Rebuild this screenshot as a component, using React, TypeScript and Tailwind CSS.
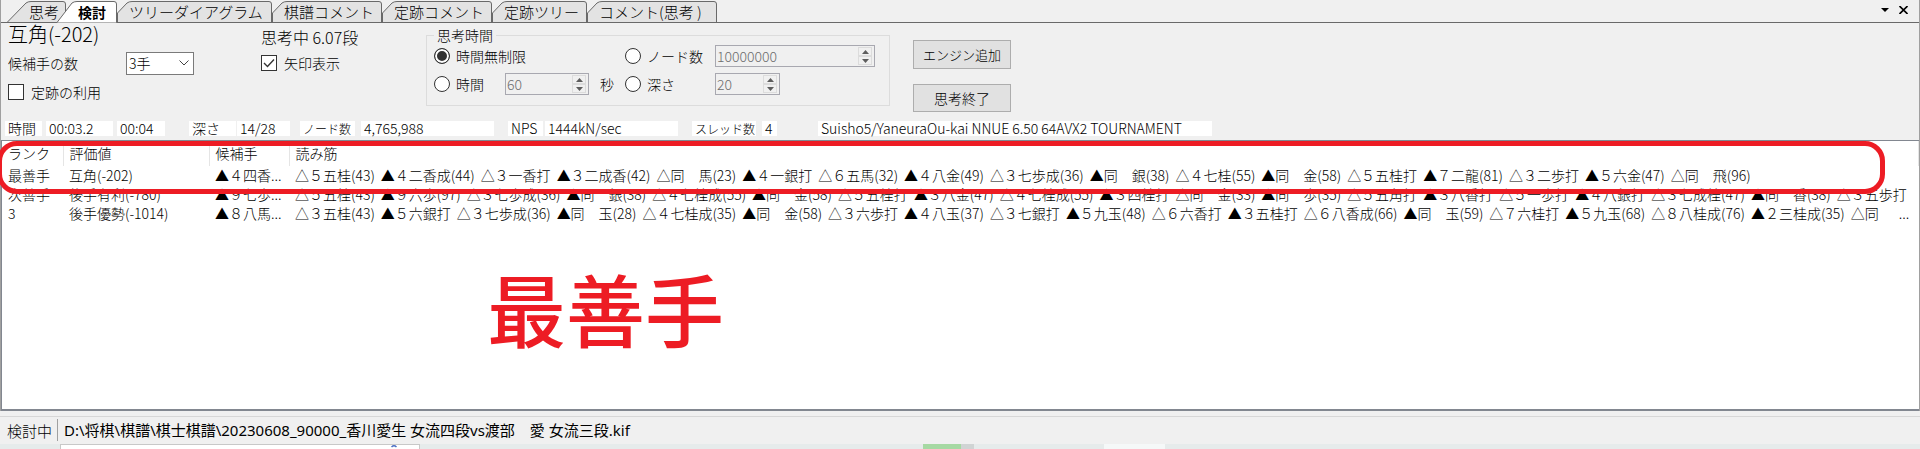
import React, { useState } from 'react';

type Tab = { label: string; width: string; w: number; slant: number; text: string };

const TABS: Tab[] = [
  { label: '思考', width: 'w-[59px]', w: 59, slant: 22, text: 'pl-[22px]' },
  { label: '検討', width: 'w-[60px] -ml-[9px]', w: 60, slant: 18, text: 'pl-[21px]' },
  { label: 'ツリーダイアグラム', width: 'w-[155px]', w: 155, slant: 12, text: 'pl-[12px]' },
  { label: '棋譜コメント', width: 'w-[110px]', w: 110, slant: 12, text: 'pl-[12px]' },
  { label: '定跡コメント', width: 'w-[110px]', w: 110, slant: 12, text: 'pl-[12px]' },
  { label: '定跡ツリー', width: 'w-[95px]', w: 95, slant: 12, text: 'pl-[12px]' },
  { label: 'コメント(思考 )', width: 'w-[130px]', w: 130, slant: 12, text: 'pl-[12px]' },
];

type Line = { rank: string; score: string; move: string; pv: string };

const LINES: Line[] = [
  {
    rank: '最善手',
    score: '互角(-202)',
    move: '▲４四香...',
    pv: '△５五桂(43) ▲４二香成(44) △３一香打 ▲３二成香(42) △同　馬(23) ▲４一銀打 △６五馬(32) ▲４八金(49) △３七歩成(36) ▲同　銀(38) △４七桂(55) ▲同　金(58) △５五桂打 ▲７二龍(81) △３二歩打 ▲５六金(47) △同　飛(96)',
  },
  {
    rank: '次善手',
    score: '後手有利(-780)',
    move: '▲９七歩...',
    pv: '△５五桂(43) ▲９六歩(97) △３七歩成(36) ▲同　銀(38) △４七桂成(55) ▲同　金(58) △５五桂打 ▲３八金(47) △４七桂成(55) ▲３四桂打 △同　金(33) ▲同　歩(35) △５五角打 ▲３八香打 △５一歩打 ▲４八銀打 △３七成桂(47) ▲同　香(38) △３五歩打',
  },
  {
    rank: '3',
    score: '後手優勢(-1014)',
    move: '▲８八馬...',
    pv: '△３五桂(43) ▲５六銀打 △３七歩成(36) ▲同　玉(28) △４七桂成(35) ▲同　金(58) △３六歩打 ▲４八玉(37) △３七銀打 ▲５九玉(48) △６六香打 ▲３五桂打 △６八香成(66) ▲同　玉(59) △７六桂打 ▲５九玉(68) △８八桂成(76) ▲２三桂成(35) △同　 ...',
  },
];

function TabShape({ w, slant, active }: { w: number; slant: number; active: boolean }) {
  const long = slant > 12;
  const d = long
    ? `M0 22.5 L${slant - 3} 3 Q${slant - 1} 1.5 ${slant + 2} 1.5 H${w - 3} Q${w - 0.5} 1.5 ${w - 0.5} 4 V22.5`
    : `M0.5 22.5 V13 L${slant - 2} 3 Q${slant} 1.5 ${slant + 3} 1.5 H${w - 3} Q${w - 0.5} 1.5 ${w - 0.5} 4 V22.5`;
  return (
    <svg className="absolute inset-0" width={w} height="23" viewBox={`0 0 ${w} 23`} aria-hidden="true">
      <path d={d} fill={active ? '#fff' : '#e3e3e3'} stroke="#696969" />
      {!active && <path d={`M0 22.5 H${w}`} stroke="#696969" />}
    </svg>
  );
}

function Spin({ id, value, label, className }: { id: string; value: string; label?: string; className: string }) {
  return (
    <div className={`flex h-[22px] items-center border border-[#a8a8b0] pr-[2px] ${className}`}>
      <input
        id={id}
        aria-label={label}
        defaultValue={value}
        disabled
        className="min-w-0 flex-1 bg-transparent pl-px text-[#6d6d6d]"
      />
      <div className="flex flex-col">
        <button type="button" disabled aria-label="増やす" className="flex h-[9px] w-[14px] items-center justify-center border border-[#dcdcdc]">
          <svg width="7" height="4" viewBox="0 0 7 4"><path d="M0 4 L3.5 0 L7 4Z" fill="#5d5d5d" /></svg>
        </button>
        <button type="button" disabled aria-label="減らす" className="flex h-[9px] w-[14px] items-center justify-center border border-[#dcdcdc]">
          <svg width="7" height="4" viewBox="0 0 7 4"><path d="M0 0 L3.5 4 L7 0Z" fill="#5d5d5d" /></svg>
        </button>
      </div>
    </div>
  );
}

function Radio({ label, value, selected, onSelect }: { label: string; value: string; selected: string; onSelect: (v: string) => void }) {
  return (
    <label className="flex items-center gap-[6px] whitespace-nowrap">
      <input
        type="radio"
        name="limit"
        checked={selected === value}
        onChange={() => onSelect(value)}
        className="size-4 shrink-0 appearance-none rounded-full border border-[#333] bg-white checked:bg-[#333] checked:shadow-[inset_0_0_0_2px_#fff]"
      />
      {label}
    </label>
  );
}

function Check({ label, initial }: { label: string; initial: boolean }) {
  const [on, setOn] = useState(initial);
  return (
    <label className="flex h-4 items-center gap-[7px] leading-4 whitespace-nowrap">
      <span className="grid size-4 place-items-center">
        <input
          type="checkbox"
          checked={on}
          onChange={() => setOn(!on)}
          className="col-start-1 row-start-1 size-4 appearance-none border border-[#333] bg-white"
        />
        {on && (
          <svg className="pointer-events-none col-start-1 row-start-1" width="12" height="12" viewBox="0 0 12 12" fill="none" stroke="#333" strokeWidth="1.4">
            <path d="M1 6 L4.5 9.5 L11 2.5" />
          </svg>
        )}
      </span>
      {label}
    </label>
  );
}

export default function App() {
  const [tab, setTab] = useState(1);
  const [limit, setLimit] = useState('none');
  return (
    <div className="flex min-h-screen flex-col overflow-hidden bg-[#f0f0f0] font-['Noto_Sans_CJK_JP',sans-serif] text-[14px] leading-[19px] font-light text-black">
      <main className="flex flex-1 flex-col border-x border-[#a0a0a0]">
        <nav className="flex h-[23px] items-center border-b border-[#696969] pl-[6px]">
          {TABS.map((t, i) => (
            <button
              key={t.label}
              type="button"
              onClick={() => setTab(i)}
              className={`relative -mb-px h-[23px] shrink-0 text-left leading-[18px] whitespace-nowrap ${t.width} ${t.text} ${i === tab ? 'z-10 text-[14px] font-bold' : 'text-[15px]'}`}
            >
              <TabShape w={t.w} slant={t.slant} active={i === tab} />
              <span className="relative">{t.label}</span>
            </button>
          ))}
          <div className="ml-auto flex items-center gap-[10px] pr-[11px] pb-[3px]">
            <button type="button" aria-label="一覧">
              <svg width="8" height="4" viewBox="0 0 8 4"><path d="M0 0H8L4 4Z" /></svg>
            </button>
            <button type="button" aria-label="閉じる">
              <svg width="9" height="8" viewBox="0 0 9 8" stroke="#000" strokeWidth="1.6"><path d="M0.5 0 L8.5 8 M8.5 0 L0.5 8" /></svg>
            </button>
          </div>
        </nav>

        <section className="flex items-start pl-[7px]">
          <div className="flex w-[253px] flex-col">
            <div className="h-6 text-[20px] leading-[22px]">互角(-202)</div>
            <div className="mt-[5px] flex h-[22px] items-center">
              <label htmlFor="candidates" className="w-[118px]">候補手の数</label>
              <div className="grid w-[68px] items-center">
                <select id="candidates" className="col-start-1 row-start-1 h-[23px] appearance-none border border-[#7a7a7a] bg-white pl-[2px]">
                  <option>3手</option>
                </select>
                <svg className="pointer-events-none col-start-1 row-start-1 mr-[5px] justify-self-end" width="10" height="6" viewBox="0 0 10 6" fill="none" stroke="#444"><path d="M0.5 0.5 L5 5 L9.5 0.5" /></svg>
              </div>
            </div>
            <div className="mt-[10px]"><Check label="定跡の利用" initial={false} /></div>
          </div>
          <div className="flex w-[165px] flex-col pt-[2px]">
            <div className="h-6 text-[16px] leading-6">思考中 6.07段</div>
            <div className="mt-[6px]"><Check label="矢印表示" initial={true} /></div>
          </div>

          <fieldset className="mt-[2px] w-[464px] border border-[#dcdcdc] pb-[10px] pl-[7px]">
            <legend className="px-[3px] leading-5">思考時間</legend>
            <div className="grid grid-cols-[71px_84px_36px_90px_160px] items-center gap-y-[6px]">
              <div className="col-span-3">
                <Radio label="時間無制限" value="none" selected={limit} onSelect={setLimit} />
              </div>
              <Radio label="ノード数" value="nodes" selected={limit} onSelect={setLimit} />
              <Spin id="nodes" label="ノード数の上限" value="10000000" className="w-[160px]" />
              <Radio label="時間" value="time" selected={limit} onSelect={setLimit} />
              <Spin id="seconds" value="60" className="w-[84px]" />
              <label htmlFor="seconds" className="pl-[11px]">秒</label>
              <Radio label="深さ" value="depth" selected={limit} onSelect={setLimit} />
              <Spin id="depth" label="深さの上限" value="20" className="w-[65px]" />
            </div>
          </fieldset>

          <div className="ml-[23px] flex w-[98px] flex-col gap-[15px] pt-[17px] text-[13px]">
            <button type="button" className="h-[29px] border border-[#adadad] bg-[#e1e1e1]">エンジン追加</button>
            <button type="button" className="h-[28px] border border-[#adadad] bg-[#e1e1e1] text-[14px]">思考終了</button>
          </div>
        </section>

        <section className="mt-[9px] mb-1 flex h-[15px] items-center pl-1 leading-[15px] whitespace-nowrap *:bg-white *:pl-[3px]">
          <span className="w-[37px]">時間</span>
          <span className="ml-1 w-[67px]">00:03.2</span>
          <span className="ml-1 w-12">00:04</span>
          <span className="ml-6 w-[47px]">深さ</span>
          <span className="ml-px w-[53px]">14/28</span>
          <span className="ml-[10px] w-[55px] text-[12px]">ノード数</span>
          <span className="ml-[6px] w-[133px]">4,765,988</span>
          <span className="ml-[14px] w-[35px]">NPS</span>
          <span className="ml-[2px] w-[133px]">1444kN/sec</span>
          <span className="ml-[14px] w-[64px] text-[12px]">スレッド数</span>
          <span className="ml-[6px] w-[15px]">4</span>
          <span className="ml-[41px] w-[394px]">Suisho5/YaneuraOu-kai NNUE 6.50 64AVX2 TOURNAMENT</span>
        </section>

        <section className="relative flex-1 border-t border-b-2 border-l border-[#828790] bg-white">
          <table className="w-full table-fixed border-collapse whitespace-nowrap">
            <colgroup>
              <col className="w-[61px]" />
              <col className="w-[146px]" />
              <col className="w-[80px]" />
              <col />
            </colgroup>
            <thead>
              <tr className="h-[25px] text-left *:border-r *:border-[#e5e5e5] *:pl-[6px] *:font-light">
                <th>ランク</th>
                <th>評価値</th>
                <th>候補手</th>
                <th>読み筋</th>
              </tr>
            </thead>
            <tbody>
              {LINES.map((l) => (
                <tr key={l.rank} className="h-[19px] *:overflow-hidden *:pl-[6px]">
                  <td>{l.rank}</td>
                  <td>{l.score}</td>
                  <td>{l.move}</td>
                  <td>
                    <div className="flex gap-[6px]">
                      {l.pv.split(' ').map((m, i) => (
                        <span key={i}>{m}</span>
                      ))}
                    </div>
                  </td>
                </tr>
              ))}
            </tbody>
          </table>
          <div className="absolute top-0 right-[34px] -left-[5px] h-[53px] rounded-[20px] border-[5px] border-[#ed1c24]" />
          <div className="absolute top-[117px] left-[485px] text-[79px] leading-[100px] font-medium text-[#ed1c24]">最善手</div>
        </section>
      </main>

      <footer className="mt-[5px] border-t border-[#d7d7d7] pt-[2px]">
        <div className="mb-[3px] flex h-[22px] items-center text-[15px] font-normal">
          <span className="flex h-full w-[58px] items-center border-r border-[#a0a0a0] pl-[7px] font-light">検討中</span>
          <span className="pl-[6px] font-['Noto_Sans','Noto_Sans_CJK_JP',sans-serif] whitespace-pre">
            {'D:\\将棋\\棋譜\\棋士棋譜\\20230608_90000_香川愛生 女流四段vs渡部　愛 女流三段.kif'}
          </span>
        </div>
        <div className="flex h-[5px] bg-[#e6ebeb]">
          <div className="ml-[60px] flex w-[360px] justify-end border border-b-0 border-[#c8c8c8] bg-white pr-[22px]">
            <svg width="6" height="4" viewBox="0 0 6 4"><path d="M0.5 2 Q3 -0.5 5.5 2" fill="none" stroke="#4a6fc4" strokeWidth="1.5" /></svg>
          </div>
          <div className="ml-[503px] w-[38px] bg-[#a6d9a3]" />
          <div className="w-[13px] bg-[#d0d4d4]" />
          <div className="ml-[130px] w-[61px] bg-[#f5f8f8]" />
        </div>
      </footer>
    </div>
  );
}
